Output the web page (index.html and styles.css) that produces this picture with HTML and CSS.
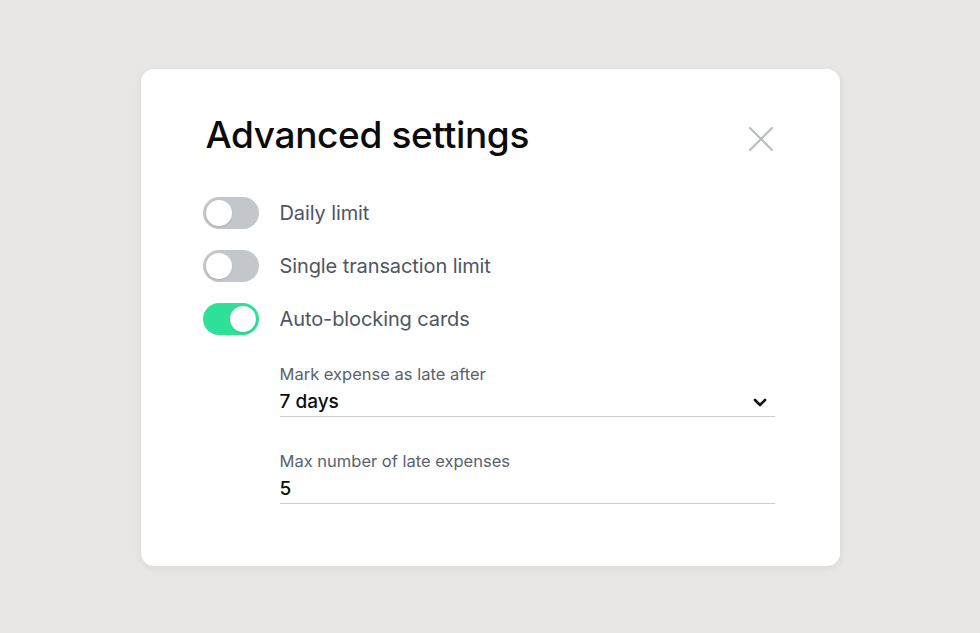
FILE: index.html
```html
<!DOCTYPE html>
<html lang="en">
<head>
<meta charset="utf-8">
<title>Advanced settings</title>
<link rel="stylesheet" href="styles.css">
</head>
<body>
<div class="page">
  <div class="card">
    <div class="header">
      <h1 class="title">Advanced settings</h1>
      <button class="close" aria-label="Close">
        <svg width="24" height="24" viewBox="0 0 24 24"><path d="M1 1L23 23M23 1L1 23" stroke="#b7bbc0" stroke-width="2" fill="none" stroke-linecap="round"/></svg>
      </button>
    </div>
    <div class="options">
      <div class="row">
        <span class="toggle"><span class="knob"></span></span>
        <span class="label">Daily limit</span>
      </div>
      <div class="row">
        <span class="toggle"><span class="knob"></span></span>
        <span class="label">Single transaction limit</span>
      </div>
      <div class="row">
        <span class="toggle on"><span class="knob"></span></span>
        <span class="label">Auto-blocking cards</span>
      </div>
    </div>
    <div class="fields">
      <div class="field">
        <div class="field-label">Mark expense as late after</div>
        <div class="field-value">
          <span>7 days</span>
          <svg class="chevron" width="14" height="9" viewBox="0 0 14 9"><path d="M2 2L7 7L12 2" stroke="#111" stroke-width="2.6" fill="none" stroke-linecap="round" stroke-linejoin="round"/></svg>
        </div>
      </div>
      <div class="field">
        <div class="field-label">Max number of late expenses</div>
        <div class="field-value"><span>5</span></div>
      </div>
    </div>
  </div>
</div>
</body>
</html>
```
FILE: styles.css
```css
* { box-sizing: border-box; }
html, body { margin: 0; padding: 0; }
body {
  background: #e8e7e5;
  font-family: Inter, "Noto Sans", sans-serif;
  width: 980px;
  height: 633px;
}
.page {
  height: 633px;
  padding-top: 2px;
  display: flex;
  align-items: center;
  justify-content: center;
}
.card {
  width: 699px;
  height: 497px;
  background: #fff;
  border-radius: 13px;
  box-shadow: 0 2px 8px rgba(0,0,0,0.07);
  padding: 43px 65px 0 62px;
}
.header {
  display: flex;
  align-items: center;
  justify-content: space-between;
  height: 46px;
}
.title {
  margin: 0 0 0 3px;
  font-size: 37px;
  line-height: 46px;
  font-weight: 500;
  color: #0b0b0b;
  letter-spacing: -0.35px;
}
.close {
  border: 0;
  background: none;
  padding: 0;
  width: 24px;
  height: 24px;
  margin-top: 7px;
  margin-right: 2px;
  display: block;
}
.close svg { display: block; }
.options {
  margin-top: 39px;
  display: flex;
  flex-direction: column;
  gap: 21px;
}
.row {
  display: flex;
  align-items: center;
  height: 32px;
}
.toggle {
  width: 56px;
  height: 32px;
  border-radius: 16px;
  background: #c3c7cc;
  padding: 3px;
  display: flex;
  flex-shrink: 0;
}
.toggle.on {
  background: #2fe099;
  justify-content: flex-end;
}
.knob {
  width: 26px;
  height: 26px;
  border-radius: 50%;
  background: #fff;
  box-shadow: 0 1px 2px rgba(0,0,0,0.12);
}
.label {
  margin-left: 21px;
  font-size: 20px;
  color: #4d5661;
  letter-spacing: -0.1px;
}
.fields {
  margin-left: 77px;
  margin-top: 29px;
  display: flex;
  flex-direction: column;
  gap: 34px;
}
.field-label {
  font-size: 16.5px;
  line-height: 20px;
  color: #5a626c;
}
.field-value {
  margin-top: 5px;
  display: flex;
  align-items: center;
  justify-content: space-between;
  font-size: 19px;
  line-height: 26px;
  font-weight: 500;
  color: #0d0d0d;
  padding-bottom: 1px;
  border-bottom: 1px solid #c9cdd1;
}
.chevron { margin-right: 8px; display: block; }
```
